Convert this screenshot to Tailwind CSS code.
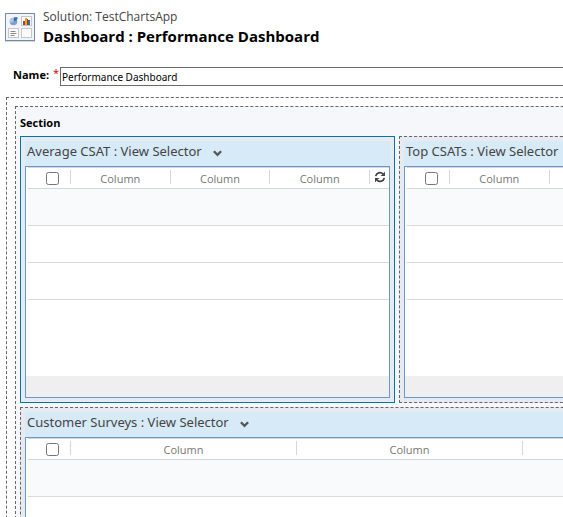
<!DOCTYPE html>
<html lang="en">
<head>
<meta charset="utf-8">
<title>Dashboard : Performance Dashboard</title>
<script src="https://cdn.jsdelivr.net/npm/@tailwindcss/browser@4"></script>
</head>
<body class="h-screen overflow-hidden bg-white font-['Segoe_UI','Open_Sans','Noto_Sans',sans-serif] text-[11px] text-black">
<svg class="hidden">
  <symbol id="chevron" viewBox="0 0 9 7"><path d="M.9 1.200 4.500 4.800 8.100 1.200" fill="none" stroke="#555" stroke-width="2.300"/></symbol>
  <symbol id="refresh" viewBox="0 0 12 12">
    <path d="M1.7 5.2A4.3 4.3 0 0 1 9 2.9M10.3 6.8A4.3 4.3 0 0 1 3 9.1" fill="none" stroke="#444" stroke-width="1.7"/>
    <path d="M11 .7v4.4H6.6zM1 11.300V6.900h4.400z" fill="#444"/>
  </symbol>
</svg>

<header class="flex gap-2 pt-2 pl-[5px]">
  <svg class="mt-[5px] h-[29px] w-[30px] shrink-0" viewBox="0 0 30 29">
    <rect x=".5" y=".5" width="29" height="27" fill="#f1f5fa" stroke="#7488a8"/>
    <path d="M0 28.500h30" stroke="#d5d9e0"/>
    <g fill="#fafafa" stroke="#c6c6c6"><rect x="16.500" y="3.500" width="10" height="9"/><rect x="3.500" y="15.500" width="10" height="9"/><rect x="16.500" y="15.500" width="10" height="9"/></g>
    <circle cx="8.500" cy="8.500" r="3.800" fill="#7f9fd0"/>
    <path d="M8.500 8.500V4.700A3.800 3.800 0 0 0 5 10z" fill="#b3c8e8"/>
    <path d="M9 8V4.300h3.700A3.700 3.700 0 0 1 9 8z" fill="#4168b4"/>
    <path d="M5.500 18.500h5M5.500 20.500h6M5.500 22.500h4" stroke="#8a8a8a"/>
    <path d="M18 8h2v4h-2z" fill="#b23a2e"/><path d="M20 5h2v7h-2z" fill="#e3a52d"/><path d="M22 6h1v6h-1z" fill="#8c4a20"/><path d="M23 7h2v5h-2z" fill="#3d62b5"/>
  </svg>
  <div>
    <p class="text-[12px] leading-[18px] text-[#444]">Solution: TestChartsApp</p>
    <h1 class="text-[15px] leading-[20px] font-bold whitespace-nowrap">Dashboard : Performance Dashboard</h1>
  </div>
</header>

<main class="pl-[6px]">
  <div class="mt-[21px] flex pl-[7px]">
    <label for="name" class="flex w-[47px] shrink-0 justify-between pr-px leading-[16px] font-bold">Name: <span class="font-normal text-[#b00] leading-[12px]">*</span></label>
    <input id="name" type="text" value="Performance Dashboard" class="h-[19px] w-full min-w-[720px] border border-[#6b6b6b] bg-white px-px font-['Segoe_UI','Noto_Sans',sans-serif] text-[10px] outline-none">
  </div>

  <div class="mt-[11px] w-full min-w-[782px] border border-dashed border-[#666] p-2">
    <section class="border border-dashed border-[#666] bg-[#f6f7fa] p-1">
      <h2 class="mt-[2px] mb-[3px] leading-[20px] font-bold">Section</h2>
      <div class="grid grid-cols-2 gap-1">

        <article class="border border-[#0078a0] bg-[#e7ebf1] p-1">
          <button type="button" class="flex h-[25px] w-full items-center gap-[11px] bg-[#d7eaf8] pb-[3px] pl-[2px] font-['Segoe_UI','Noto_Sans',sans-serif] text-[13px] text-[#444]">Average CSAT : View Selector <svg class="mt-[3px] h-[7px] w-[9px]"><use href="#chevron"/></svg></button>
          <div class="border border-[#6699cc] bg-white">
            <div class="h-[209px] pl-[2px]">
              <table class="w-full table-fixed border-separate border-spacing-0">
                <thead class="text-[#777]"><tr>
                  <th class="w-[43px] border-y border-[#d6d6d6] p-0"><div class="flex h-5 items-start pt-[2px]"><div class="flex h-[14px] w-full items-center border-r border-[#d6d6d6] pt-[3px] pl-[18px]"><input type="checkbox" aria-label="Select all rows of Average CSAT" class="size-[13px]"></div></div></th>
                  <th class="border-y border-[#d6d6d6] p-0 font-normal"><div class="h-5 pt-[2px]"><div class="h-[14px] border-r border-[#d6d6d6] leading-[18px]">Column</div></div></th>
                  <th class="border-y border-[#d6d6d6] p-0 font-normal"><div class="h-5 pt-[2px]"><div class="h-[14px] border-r border-[#d6d6d6] leading-[18px]">Column</div></div></th>
                  <th class="border-y border-[#d6d6d6] p-0 font-normal"><div class="h-5 pt-[2px]"><div class="h-[14px] border-r border-[#d6d6d6] leading-[18px]">Column</div></div></th>
                  <th class="w-[19px] border-y border-[#d6d6d6] p-0"><button type="button" aria-label="Refresh Average CSAT" class="flex h-5 w-full items-start justify-center pt-[3px]"><svg class="size-3"><use href="#refresh"/></svg></button></th>
                </tr></thead>
                <tbody>
                  <tr><td colspan="5" class="h-[37px] border-b border-[#dadada] bg-[#f9fafc] p-0"></td></tr>
                  <tr><td colspan="5" class="h-[37px] border-b border-[#dadada] p-0"></td></tr>
                  <tr><td colspan="5" class="h-[37px] border-b border-[#dadada] p-0"></td></tr>
                </tbody>
              </table>
            </div>
            <div class="h-[21px] bg-[#efefef]"></div>
          </div>
        </article>

        <article class="border border-dashed border-[#666] bg-[#e7ebf1] p-1">
          <button type="button" class="flex h-[25px] w-full items-center gap-[11px] bg-[#d7eaf8] pb-[3px] pl-[2px] font-['Segoe_UI','Noto_Sans',sans-serif] text-[13px] text-[#444]">Top CSATs : View Selector <svg class="mt-[3px] h-[7px] w-[9px]"><use href="#chevron"/></svg></button>
          <div class="border border-[#6699cc] bg-white">
            <div class="h-[209px] pl-[2px]">
              <table class="w-full table-fixed border-separate border-spacing-0">
                <thead class="text-[#777]"><tr>
                  <th class="w-[43px] border-y border-[#d6d6d6] p-0"><div class="flex h-5 items-start pt-[2px]"><div class="flex h-[14px] w-full items-center border-r border-[#d6d6d6] pt-[3px] pl-[18px]"><input type="checkbox" aria-label="Select all rows of Top CSATs" class="size-[13px]"></div></div></th>
                  <th class="border-y border-[#d6d6d6] p-0 font-normal"><div class="h-5 pt-[2px]"><div class="h-[14px] border-r border-[#d6d6d6] leading-[18px]">Column</div></div></th>
                  <th class="border-y border-[#d6d6d6] p-0 font-normal"><div class="h-5 pt-[2px]"><div class="h-[14px] border-r border-[#d6d6d6] leading-[18px]">Column</div></div></th>
                  <th class="border-y border-[#d6d6d6] p-0 font-normal"><div class="h-5 pt-[2px]"><div class="h-[14px] border-r border-[#d6d6d6] leading-[18px]">Column</div></div></th>
                  <th class="w-[19px] border-y border-[#d6d6d6] p-0"><button type="button" aria-label="Refresh Top CSATs" class="flex h-5 w-full items-start justify-center pt-[3px]"><svg class="size-3"><use href="#refresh"/></svg></button></th>
                </tr></thead>
                <tbody>
                  <tr><td colspan="5" class="h-[37px] border-b border-[#dadada] bg-[#f9fafc] p-0"></td></tr>
                  <tr><td colspan="5" class="h-[37px] border-b border-[#dadada] p-0"></td></tr>
                  <tr><td colspan="5" class="h-[37px] border-b border-[#dadada] p-0"></td></tr>
                </tbody>
              </table>
            </div>
            <div class="h-[21px] bg-[#efefef]"></div>
          </div>
        </article>

        <article class="col-span-2 border border-dashed border-[#666] bg-[#e7ebf1] p-1">
          <button type="button" class="flex h-[25px] w-full items-center gap-[11px] bg-[#d7eaf8] pb-[3px] pl-[2px] font-['Segoe_UI','Noto_Sans',sans-serif] text-[13px] text-[#444]">Customer Surveys : View Selector <svg class="mt-[3px] h-[7px] w-[9px]"><use href="#chevron"/></svg></button>
          <div class="border border-[#6699cc] bg-white">
            <div class="h-[209px] pl-[2px]">
              <table class="w-full table-fixed border-separate border-spacing-0">
                <thead class="text-[#777]"><tr>
                  <th class="w-[43px] border-y border-[#d6d6d6] p-0"><div class="flex h-5 items-start pt-[2px]"><div class="flex h-[14px] w-full items-center border-r border-[#d6d6d6] pt-[3px] pl-[18px]"><input type="checkbox" aria-label="Select all rows of Customer Surveys" class="size-[13px]"></div></div></th>
                  <th class="border-y border-[#d6d6d6] p-0 font-normal"><div class="h-5 pt-[2px]"><div class="h-[14px] border-r border-[#d6d6d6] leading-[18px]">Column</div></div></th>
                  <th class="border-y border-[#d6d6d6] p-0 font-normal"><div class="h-5 pt-[2px]"><div class="h-[14px] border-r border-[#d6d6d6] leading-[18px]">Column</div></div></th>
                  <th class="border-y border-[#d6d6d6] p-0 font-normal"><div class="h-5 pt-[2px]"><div class="h-[14px] border-r border-[#d6d6d6] leading-[18px]">Column</div></div></th>
                  <th class="w-[19px] border-y border-[#d6d6d6] p-0"><button type="button" aria-label="Refresh Customer Surveys" class="flex h-5 w-full items-start justify-center pt-[3px]"><svg class="size-3"><use href="#refresh"/></svg></button></th>
                </tr></thead>
                <tbody>
                  <tr><td colspan="5" class="h-[37px] border-b border-[#dadada] bg-[#f9fafc] p-0"></td></tr>
                  <tr><td colspan="5" class="h-[37px] border-b border-[#dadada] p-0"></td></tr>
                  <tr><td colspan="5" class="h-[37px] border-b border-[#dadada] p-0"></td></tr>
                </tbody>
              </table>
            </div>
            <div class="h-[21px] bg-[#efefef]"></div>
          </div>
        </article>

      </div>
    </section>
  </div>
</main>
</body>
</html>
